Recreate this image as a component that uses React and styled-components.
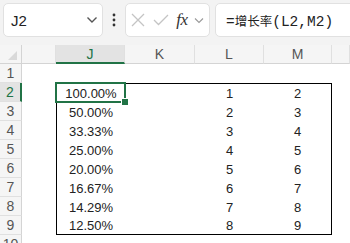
import styled, { createGlobalStyle } from 'styled-components';

const GlobalStyle = createGlobalStyle`
  html, body {
    margin: 0;
    padding: 0;
    background: #ffffff;
    overflow: hidden;
  }
  body {
    font-family: "Liberation Sans", Arial, sans-serif;
  }
`;

const Page = styled.div`
  width: 350px;
  height: 243px;
  overflow: hidden;
  background: #ffffff;
`;

const FormulaBar = styled.div`
  height: 45px;
  box-sizing: border-box;
  padding: 3px 0 8px 3px;
  background: #f3f3f3;
  display: flex;
  align-items: stretch;
`;

const Box = styled.div`
  background: #ffffff;
  border: 1px solid #e1e1e1;
  border-radius: 5px;
  box-sizing: border-box;
  display: flex;
  align-items: center;
  flex: ${p => p.$grow ? '1' : 'none'};
  width: ${p => p.$width ? `${p.$width}px` : 'auto'};
  margin-right: ${p => p.$grow ? '-10px' : '0'};
`;

const NameText = styled.span`
  font-size: 15px;
  color: #222;
  margin-left: 7px;
  flex: 1;
`;

const Dots = styled.div`
  width: 22px;
  display: flex;
  align-items: center;
  justify-content: center;
`;

const Gap = styled.div`
  width: 5px;
`;

const IconSlot = styled.div`
  width: ${p => p.$w}px;
  display: flex;
  align-items: center;
  justify-content: center;
`;

const FxText = styled.span`
  font-family: "Liberation Serif", "Times New Roman", serif;
  font-style: italic;
  font-size: 17px;
  color: #333;
  letter-spacing: -0.5px;
`;

const FormulaText = styled.span`
  font-family: "Liberation Mono", "DejaVu Sans Mono", monospace;
  font-size: 14.5px;
  color: #222;
  margin-left: 10px;
  white-space: nowrap;
`;

const Cjk = styled.span`
  font-family: "Noto Sans CJK SC", sans-serif;
  font-size: 12.5px;
`;

const Sheet = styled.div`
  position: relative;
  display: grid;
  grid-template-columns: 22px 34px 69px 70px 69px 68px 18px;
  grid-auto-rows: 19px;
`;

const Corner = styled.div`
  background: #f5f5f5;
  border-bottom: 1px solid #d4d4d4;
  border-right: 1px solid #d4d4d4;
  box-sizing: border-box;
  position: relative;
  &::after {
    content: '';
    position: absolute;
    right: 4px;
    bottom: 3px;
    border-left: 9px solid transparent;
    border-bottom: 9px solid #d9d9d9;
  }
`;

const ColHead = styled.div`
  background: ${p => p.$active ? '#e3e3e3' : '#f5f5f5'};
  border-bottom: ${p => p.$active ? '2px solid #217346' : '1px solid #d4d4d4'};
  border-right: 1px solid #e0e0e0;
  box-sizing: border-box;
  display: flex;
  align-items: center;
  justify-content: center;
  font-size: 14px;
  color: ${p => p.$active ? '#217346' : '#555'};
`;

const RowHead = styled.div`
  background: ${p => p.$active ? '#e3e3e3' : '#f5f5f5'};
  border-bottom: 1px solid #e0e0e0;
  border-right: ${p => p.$active ? '2px solid #217346' : '1px solid #d4d4d4'};
  box-sizing: border-box;
  display: flex;
  align-items: center;
  justify-content: center;
  font-size: 14px;
  color: ${p => p.$active ? '#217346' : '#555'};
`;

const Cell = styled.div`
  display: flex;
  align-items: center;
  justify-content: center;
  font-size: 13px;
  color: #222;
  box-sizing: border-box;
  border-top: ${p => p.$top ? '1px solid #000' : 'none'};
  border-bottom: ${p => p.$bottom ? '1px solid #000' : 'none'};
  border-left: ${p => p.$left ? '1px solid #000' : 'none'};
  border-right: ${p => p.$right ? '1px solid #000' : 'none'};
  padding-top: 1px;
`;

const Selection = styled.div`
  position: absolute;
  left: 55px;
  top: 37px;
  width: 71px;
  height: 21px;
  border: 2px solid #217346;
  box-sizing: border-box;
  &::after {
    content: '';
    position: absolute;
    right: -5px;
    bottom: -5px;
    width: 6px;
    height: 6px;
    background: #217346;
    border: 1px solid #fff;
  }
`;

const Chevron = () => (
  <svg width="12" height="8" viewBox="0 0 12 8">
    <path d="M1.5 1.5 L6 6 L10.5 1.5" fill="none" stroke="#555" strokeWidth="1.4" />
  </svg>
);

const SmallChevron = () => (
  <svg width="10" height="7" viewBox="0 0 10 7">
    <path d="M1 1.5 L5 5.5 L9 1.5" fill="none" stroke="#999" strokeWidth="1.1" />
  </svg>
);

const VDots = () => (
  <svg width="4" height="14" viewBox="0 0 4 14">
    <circle cx="2" cy="2" r="1.4" fill="#333" />
    <circle cx="2" cy="7" r="1.4" fill="#333" />
    <circle cx="2" cy="12" r="1.4" fill="#333" />
  </svg>
);

const Cross = () => (
  <svg width="14" height="14" viewBox="0 0 14 14">
    <path d="M1 1 L13 13 M13 1 L1 13" stroke="#c4c4c4" strokeWidth="1.3" />
  </svg>
);

const Check = () => (
  <svg width="16" height="12" viewBox="0 0 16 12">
    <path d="M1 6 L5.5 10.5 L15 1" fill="none" stroke="#c4c4c4" strokeWidth="1.3" />
  </svg>
);

const cols = ['', 'J', 'K', 'L', 'M', ''];
const data = [
  ['100.00%', 1, 2],
  ['50.00%', 2, 3],
  ['33.33%', 3, 4],
  ['25.00%', 4, 5],
  ['20.00%', 5, 6],
  ['16.67%', 6, 7],
  ['14.29%', 7, 8],
  ['12.50%', 8, 9],
];

const App = () => {
  const rows = [null, ...data, null];

  return (
    <Page>
      <GlobalStyle />
      <FormulaBar>
        <Box $width={100}>
          <NameText>J2</NameText>
          <IconSlot $w={20}><Chevron /></IconSlot>
        </Box>
        <Dots><VDots /></Dots>
        <Box $width={85}>
          <IconSlot $w={24}><Cross /></IconSlot>
          <IconSlot $w={22}><Check /></IconSlot>
          <IconSlot $w={20}><FxText>fx</FxText></IconSlot>
          <IconSlot $w={14}><SmallChevron /></IconSlot>
        </Box>
        <Gap />
        <Box $grow>
          <FormulaText>=<Cjk>增长率</Cjk>(L2,M2)</FormulaText>
        </Box>
      </FormulaBar>
      <Sheet>
        <Corner />
        {cols.map((c, i) => (
          <ColHead key={i} $active={c === 'J'}>{c}</ColHead>
        ))}
        {rows.map((r, ri) => {
          const n = ri + 1;
          const inBox = r !== null;
          const first = ri === 1;
          const last = ri === data.length;
          return [
            <RowHead key={`h${ri}`} $active={n === 2}>{n}</RowHead>,
            <Cell key={`i${ri}`} />,
            <Cell key={`j${ri}`} $top={first} $bottom={last} $left={inBox}>{r && r[0]}</Cell>,
            <Cell key={`k${ri}`} $top={first} $bottom={last} />,
            <Cell key={`l${ri}`} $top={first} $bottom={last}>{r && r[1]}</Cell>,
            <Cell key={`m${ri}`} $top={first} $bottom={last} $right={inBox}>{r && r[2]}</Cell>,
            <Cell key={`n${ri}`} />,
          ];
        })}
        <Selection />
      </Sheet>
    </Page>
  );
};

export default App;
